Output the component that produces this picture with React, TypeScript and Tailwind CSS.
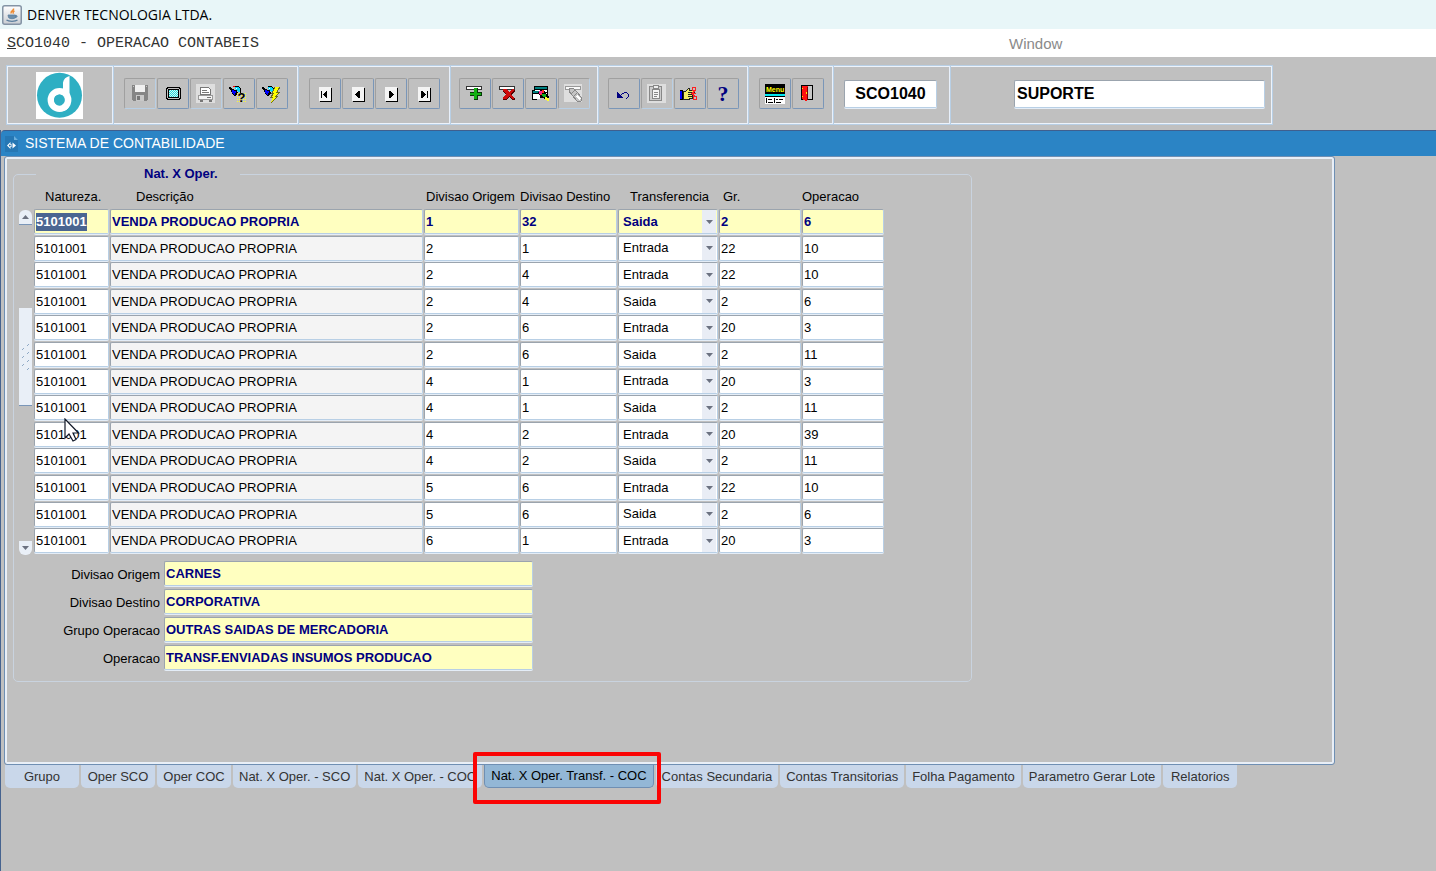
import type { ReactNode } from "react";

const field =
  "block w-full rounded-[2px] border border-t-[#9ba4ae] border-l-[#9ba4ae] border-r-[#b8cfe5] border-b-[#b8cfe5] shadow-[0_1px_0_#e4edf7] outline-none";
const activeField = "bg-[#ffffc0] font-bold text-[#000080]";

type Row = [origem: string, destino: string, transf: string, gr: string, oper: string];

const rows: Row[] = [
  ["1", "32", "Saida", "2", "6"],
  ["2", "1", "Entrada", "22", "10"],
  ["2", "4", "Entrada", "22", "10"],
  ["2", "4", "Saida", "2", "6"],
  ["2", "6", "Entrada", "20", "3"],
  ["2", "6", "Saida", "2", "11"],
  ["4", "1", "Entrada", "20", "3"],
  ["4", "1", "Saida", "2", "11"],
  ["4", "2", "Entrada", "20", "39"],
  ["4", "2", "Saida", "2", "11"],
  ["5", "6", "Entrada", "22", "10"],
  ["5", "6", "Saida", "2", "6"],
  ["6", "1", "Entrada", "20", "3"],
];

const details = [
  ["Divisao Origem", "CARNES"],
  ["Divisao Destino", "CORPORATIVA"],
  ["Grupo Operacao", "OUTRAS SAIDAS DE MERCADORIA"],
  ["Operacao", "TRANSF.ENVIADAS INSUMOS PRODUCAO"],
];

const tabs = [
  "Grupo",
  "Oper SCO",
  "Oper COC",
  "Nat. X Oper. - SCO",
  "Nat. X Oper. - COC",
  "Nat. X Oper. Transf. - COC",
  "Contas Secundaria",
  "Contas Transitorias",
  "Folha Pagamento",
  "Parametro Gerar Lote",
  "Relatorios",
];
const activeTab = "Nat. X Oper. Transf. - COC";

function Icon({ children }: { children: ReactNode }) {
  return (
    <svg width="20" height="20" viewBox="0 0 20 20" shapeRendering="crispEdges" className="overflow-visible" aria-hidden="true">
      {children}
    </svg>
  );
}

function ToolButton({ label, disabled = false, children }: { label: string; disabled?: boolean; children: ReactNode }) {
  return (
    <button
      type="button"
      aria-label={label}
      disabled={disabled}
      className={`flex h-[31px] w-8 items-center justify-center rounded-[2px] border border-t-[#a0a0a0] border-l-[#a0a0a0] ${
        disabled ? "border-r-[#b8cfe5] border-b-[#b8cfe5]" : "border-r-[#7a96b8] border-b-[#7a96b8]"
      }`}
    >
      {children}
    </button>
  );
}

function Group({ className, children }: { className: string; children: ReactNode }) {
  return (
    <div className={`flex gap-px border-r border-[#e8f0fb] pt-3 shadow-[1px_0_0_#b8cfe5] ${className}`}>{children}</div>
  );
}

function PageIcon({ d }: { d: string }) {
  return (
    <Icon>
      <path d="M5 4h12v14H5z" fill="#000" />
      <path d="M4 3h12v14H4z" fill="#f4f4f4" />
      <path d={d} fill="#000" />
    </Icon>
  );
}

const torch = (
  <>
    <path d="M0 3h2v1h1v1h2v1h3v2h1v2H8v1H7v1H5v-1H4v-1H3V8H2V6H1V5H0z" fill="#000" />
    <path d="M3 6h2v1h2v2H6v2H5v-1H4V9H3z" fill="#0000ff" />
    <path d="M6 3h4v1h1v4H9V7H8V6H7V5H6z" fill="#00d8ff" />
    <path d="M10 3h1v1h-1zM11 4h1v5h-1zM6 2h4v1H6z" fill="#000" />
    <path d="M7 4h1v1H7z" fill="#fff" />
  </>
);

function JavaIcon() {
  return (
    <svg width="20" height="20" viewBox="0 0 20 20" aria-hidden="true">
      <defs>
        <linearGradient id="java-bg" x1="0" y1="0" x2="0" y2="1">
          <stop offset="0" stopColor="#fff" />
          <stop offset="1" stopColor="#c9cdd2" />
        </linearGradient>
      </defs>
      <rect x=".75" y=".75" width="18.5" height="18.5" rx="2" fill="url(#java-bg)" stroke="#8494a5" strokeWidth="1.5" />
      <path d="M11.5 3.500c1 2-3.500 2.500-2.300 5M12.500 5.800c-1.500.8-1.800 1.500-1 2.900" fill="none" stroke="#ee8a32" strokeWidth="1.500" />
      <path d="M6 10h7.500v2.500c-1 1.600-6 1.600-7 0zM13.500 10.500c2.500-.5 2 2-.5 2.300" fill="#6d8eaa" stroke="#5c7f9e" strokeWidth=".8" />
      <path d="M4.500 15c2 1.700 9 1.700 11 0" fill="none" stroke="#5c7f9e" strokeWidth="1.200" />
    </svg>
  );
}

function Logo() {
  return (
    <svg width="47" height="47" viewBox="0 0 47 47" role="img" aria-label="Denver">
      <path d="M0 0h47v47H0z" fill="#fff" />
      <circle cx="23.500" cy="23.300" r="22.500" fill="#2eafc3" />
      <circle cx="23.500" cy="28" r="8.700" fill="none" stroke="#fff" strokeWidth="6.400" />
      <path d="M27 10.500C27.500 7 30 5 33.500 4v22c0 5-2 9-6 11l-2-3c1.500-2 1.500-5 1.500-8z" fill="#fff" />
      <path d="M22 39c5 1.200 9.500-.5 11.500-5-1 1.700-3 2-5 1.300" fill="#fff" />
      <circle cx="23.500" cy="28" r="5.400" fill="#2eafc3" />
    </svg>
  );
}

function Toolbar() {
  return (
    <div
      role="toolbar"
      aria-label="Ferramentas"
      className="mt-2 ml-[6px] flex h-[60px] w-fit border border-[#b8cfe5] shadow-[inset_0_0_0_1px_#edf3fb]"
    >
      <div className="flex w-[106px] border-r border-[#e8f0fb] pt-[6px] pl-[29px] shadow-[1px_0_0_#b8cfe5]">
        <Logo />
      </div>
      <Group className="w-[185px] pl-[11px]">
        <ToolButton label="Salvar" disabled>
          <Icon>
            <path d="M2 1h16v15h-1v1H3v-1H2z" fill="#858585" />
            <path d="M5 1h10v7H5z" fill="#f0f0f0" />
            <path d="M3 2h1v1H3zM16 2h1v1h-1zM6 11h8v6H6z" fill="#c8c8c8" />
            <path d="M7 12h3v4H7z" fill="#777" />
          </Icon>
        </ToolButton>
        <ToolButton label="Tela">
          <Icon>
            <path d="M4 3h13v1h1v11h-1v1H4v-1H3V4h1z" fill="#000" />
            <path d="M5 4h11v1h1v9h-1v1H5v-1H4V5h1z" fill="#c0c0c0" />
            <path d="M5 5h11v9H5z" fill="#000" />
            <path d="M6 6h9v7H6z" fill="#d8f4f4" />
            <path d="M6 6.500h9M6 8.500h9M6 10.500h9M6 12.500h9" stroke="#20dada" strokeDasharray="1 1" />
            <path d="M7 7.500h8M7 9.500h8M7 11.500h8" stroke="#20dada" strokeDasharray="1 1" />
          </Icon>
        </ToolButton>
        <ToolButton label="Imprimir" disabled>
          <Icon>
            <path d="M0 0h19v19H0z" fill="#dedede" />
            <path d="M4.500 3.500h8l2 2v5h-10z" fill="#fff" stroke="#777" />
            <path d="M6 6.500h5M6 8.500h7" stroke="#777" />
            <path d="M2.500 11.500h14v4h-14z" fill="#f5f5f5" stroke="#999" />
            <path d="M11 13h4v1h-4zM4 16h3v2H4zM13 16h3v2h-3z" fill="#777" />
          </Icon>
        </ToolButton>
        <ToolButton label="Entrar consulta">
          <Icon>
            {torch}
            <path d="M4 2h2v1H4z" fill="#f00" />
            <path d="M8 9.500h10M8 11.500h10M8 13.500h10M8 15.500h10M8 17.500h10" stroke="#ffff30" strokeDasharray="1 1" />
            <text x="8.500" y="18" fontFamily="Liberation Sans" fontSize="13" fontWeight="bold" fill="#000">?</text>
          </Icon>
        </ToolButton>
        <ToolButton label="Executar consulta">
          <Icon>
            {torch}
            <path d="M13 3h5l-3 5h3l-4 4h2l-7 7 2-6H9l3-4h-1z" fill="#ffff00" />
            <path d="M18 3l-3 5h3l-4 4h2l-7 7M13 3l-3 6h2l-3 4h2" fill="none" stroke="#6b6b20" />
          </Icon>
        </ToolButton>
      </Group>
      <Group className="w-[152px] pl-[11px]">
        <ToolButton label="Primeiro"><PageIcon d="M6 7h1v7H6zM12 7v7h-1v-1h-1v-1H9v-1H8v-1h1V9h1V8h1V7z" /></ToolButton>
        <ToolButton label="Anterior"><PageIcon d="M12 7v7h-2v-1H9v-1H8v-1H7v-1h1V9h1V8h1V7z" /></ToolButton>
        <ToolButton label="Proximo"><PageIcon d="M8 7h2v1h1v1h1v1h1v1h-1v1h-1v1h-1v1H8z" /></ToolButton>
        <ToolButton label="Ultimo"><PageIcon d="M13 7h1v7h-1zM7 7h2v1h1v1h1v1h1v1h-1v1h-1v1H9v1H7z" /></ToolButton>
      </Group>
      <Group className="w-[148px] pl-[9px]">
        <ToolButton label="Inserir registro">
          <Icon>
            <path d="M1.500 2.500h15v3h-15z" fill="#fff" stroke="#333" />
            <path d="M9 4h4v4h4v4h-4v4H9v-4H5V8h4z" fill="#063806" />
            <path d="M9 4h3v5h4v2h-4v4H9v-4H5V9h4z" fill="#12b012" />
          </Icon>
        </ToolButton>
        <ToolButton label="Excluir registro">
          <Icon>
            <path d="M1.500 2.500h15v3h-15z" fill="#fff" stroke="#333" />
            <path d="M5 6h3l3 3 3-3h3v2l-4 3 4 4v1h-3l-3-3-3 3H5v-2l4-3-4-3z" fill="#520000" />
            <path d="M5 5h3l3 3 3-3h2v2l-4 3 4 4v1h-2l-3-3-3 3H5v-2l4-3-4-3z" fill="#cd0a0a" />
          </Icon>
        </ToolButton>
        <ToolButton label="Limpar bloco">
          <Icon>
            <path d="M3 2h14v12H6v2H1V6h2z" fill="#000" />
            <path d="M4 3h12v2H4z" fill="#008080" />
            <path d="M4 6h12v2H4z" fill="#fff" />
            <path d="M2 7h9v2H2z" fill="#008080" />
            <path d="M2 10h7v5H2zM11 9h5v4h-5z" fill="#fff" />
            <path d="M7 8l2-2h4l2 4 3 2v3l-3 1-4-3-3-2z" fill="#000" />
            <path d="M8 7h3v3H8z" fill="#f4209a" />
            <path d="M11 6h2v3h-2zM9 10h2v1H9z" fill="#ff3020" />
            <path d="M11 10h4v3h-3v-1h-1z" fill="#10b020" />
            <path d="M14 13h2v1h2v3h-2v-1h-2z" fill="#ffff30" />
          </Icon>
        </ToolButton>
        <ToolButton label="Limpar registro" disabled>
          <Icon>
            <path d="M0 0h18v18H0z" fill="#dedede" />
            <path d="M1.500 2.500h15v3h-15z" fill="#fafafa" stroke="#999" />
            <path d="M5 4h4l4 4 4 5 1 3-2 2-3-1-5-6-3-4z" fill="#c4c4c4" stroke="#888" />
            <path d="M12 12l2-1 3 4-2 1z" fill="#fff" />
            <path d="M8 9l3-3M10 12l3-3" stroke="#888" />
          </Icon>
        </ToolButton>
      </Group>
      <Group className="w-[150px] pl-[10px]">
        <ToolButton label="Desfazer">
          <Icon>
            <path d="M3 8h1v1h1v1h1v1h1v1h1v1h1v1H3z" fill="#000080" />
            <path d="M6 11h1v-1h1V9h2V8h3v1h1v1h1v3h-1v1h-1v1h-1v-1h1v-1h1v-3h-1V9h-3v1H8v1H7v1H6z" fill="#000080" />
          </Icon>
        </ToolButton>
        <ToolButton label="Colar" disabled>
          <Icon>
            <path d="M0 0h19v19H0z" fill="#dedede" />
            <path d="M2.500 2.500h12v14h-12z" fill="#ccc" stroke="#888" />
            <path d="M5.500 5.500h7v9h-7z" fill="#f5f5f5" stroke="#888" />
            <path d="M6.500 1.500h5v3h-5z" fill="#eee" stroke="#888" />
            <path d="M7 8.500h4M7 10.500h4M7 12.500h3" stroke="#888" />
          </Icon>
        </ToolButton>
        <ToolButton label="Lista">
          <Icon>
            <path d="M0 6h3v10H0z" fill="#000" />
            <path d="M0 7h2v8H0z" fill="#0000ff" />
            <path d="M3.500 7.500h2l3-3h1v2h5v3h-2v5h-3v1h-6z" fill="#f3ed65" stroke="#222" />
            <path d="M8 8.500h5M8 10.500h4M8 12.500h4" stroke="#222" />
            <path d="M12.500 3.500h3v3h-3zM13.500 12.500h3v3h-3zM15 6.500l-3 3 3 3M12 9.500h4" fill="none" stroke="#ff2020" />
          </Icon>
        </ToolButton>
        <ToolButton label="Ajuda">
          <span className="font-['Liberation_Serif',serif] text-[22px] leading-6 font-bold text-[#000080]">?</span>
        </ToolButton>
      </Group>
      <Group className="w-[85px] pl-[11px]">
        <ToolButton label="Menu">
          <Icon>
            <path d="M0 0h20v10H0z" fill="#000" />
            <text x="1" y="8" fontFamily="Liberation Sans Narrow, Liberation Sans" fontSize="7" fontWeight="bold" fill="#ffff00">Menu</text>
            <path d="M0 10h20v2H0z" fill="#00e8f0" />
            <path d="M0 12h20v8H0z" fill="#fff" />
            <path d="M0 12.500h20M3 15.500h4M11 15.500h2M14 15.500h4M3 18.500h5M11 18.500h5" stroke="#000" />
            <path d="M1.500 14v5M9.500 14v5" stroke="#000" />
          </Icon>
        </ToolButton>
        <ToolButton label="Sair">
          <Icon>
            <path d="M3 1h12v15H3z" fill="#000" />
            <path d="M10 2h4v13h-4z" fill="#c8c8c8" />
            <path d="M4 2h5l1 1v13l-2 1-4-2z" fill="#ff1010" />
            <path d="M9 3h1v13H9z" fill="#7a0000" />
            <path d="M4 4h1v1H4zM4 12h1v1H4zM8 8h1v2H8z" fill="#fff200" />
          </Icon>
        </ToolButton>
      </Group>
      <div className="w-[117px] border-r border-[#e8f0fb] pt-[14px] pr-3 pl-[11px] shadow-[1px_0_0_#b8cfe5]">
        <input
          aria-label="Programa"
          readOnly
          value="SCO1040"
          className={`${field} h-7 bg-white text-center text-base font-bold text-black`}
        />
      </div>
      <div className="w-[322px] pt-[14px] pr-[7px] pl-16">
        <input
          aria-label="Usuario"
          readOnly
          value="SUPORTE"
          className={`${field} h-7 bg-white pl-[2px] text-base font-bold text-black`}
        />
      </div>
    </div>
  );
}

function ScrollColumn() {
  return (
    <div className="mt-[26px] flex w-[13px] flex-col">
      <button
        type="button"
        aria-label="Rolar para cima"
        className="flex h-[15px] items-center justify-center rounded-t-[6px] border-b border-[#7a96b8] bg-[#e9eff7]"
      >
        <svg width="7" height="4" viewBox="0 0 7 4" aria-hidden="true"><path d="M0 4l3.500-4L7 4z" fill="#6b7180" /></svg>
      </button>
      <div className="mt-[83px] flex h-[98px] items-center justify-center border-b border-[#7a96b8] bg-[#e9eff7]">
        <svg width="9" height="28" viewBox="0 0 9 28" aria-hidden="true">
          <path d="M1 7l2-2M6 3l2-2M1 15l2-2M6 11l2-2M1 23l2-2M6 19l2-2M6 27l2-2" stroke="#8fa9c6" />
        </svg>
      </div>
      <button
        type="button"
        aria-label="Rolar para baixo"
        className="mt-auto flex h-[14px] items-center justify-center rounded-b-[6px] bg-[#e9eff7]"
      >
        <svg width="7" height="4" viewBox="0 0 7 4" aria-hidden="true"><path d="M0 0l3.500 4L7 0z" fill="#6b7180" /></svg>
      </button>
    </div>
  );
}

function GridTable() {
  const cell = "p-0 pr-px align-top";
  return (
    <table className="h-[371px] w-[851px] table-fixed border-collapse text-[13px]">
      <colgroup>
        <col className="w-[76px]" />
        <col className="w-[314px]" />
        <col className="w-[96px]" />
        <col className="w-[98px]" />
        <col className="w-[101px]" />
        <col className="w-[83px]" />
        <col className="w-[83px]" />
      </colgroup>
      <thead>
        <tr className="h-[25px] text-left whitespace-nowrap [&>th]:p-0 [&>th]:font-normal">
          <th scope="col"><span className="pl-[11px]">Natureza.</span></th>
          <th scope="col"><span className="pl-[26px]">Descrição</span></th>
          <th scope="col"><span className="pl-[2px]">Divisao Origem</span></th>
          <th scope="col">Divisao Destino</th>
          <th scope="col"><span className="pl-3">Transferencia</span></th>
          <th scope="col"><span className="pl-1">Gr.</span></th>
          <th scope="col">Operacao</th>
        </tr>
      </thead>
      <tbody>
        {rows.map(([origem, destino, transf, gr, oper], i) => {
          const tone = i === 0 ? activeField : "bg-white text-black";
          const readTone = i === 0 ? activeField : "bg-[#f4f4f4] text-black";
          const input = (label: string, value: string, color: string) => (
            <td className={cell}>
              <input aria-label={`${label} ${i + 1}`} defaultValue={value} className={`${field} ${color} h-[25px] pl-px`} />
            </td>
          );
          return (
            <tr key={i}>
              {i === 0 ? (
                <td className={cell}>
                  <div className={`${field} ${activeField} flex h-[25px] items-center pl-px`}>
                    <input
                      aria-label="Natureza 1"
                      defaultValue="5101001"
                      className="h-[18px] w-[51px] bg-[#4a6591] font-bold text-white outline-none"
                    />
                  </div>
                </td>
              ) : (
                input("Natureza", "5101001", tone)
              )}
              {input("Descrição", "VENDA PRODUCAO PROPRIA", readTone)}
              {input("Divisao Origem", origem, tone)}
              {input("Divisao Destino", destino, tone)}
              <td className={cell}>
                <div className="relative">
                  <select
                    aria-label={`Transferencia ${i + 1}`}
                    defaultValue={transf}
                    className={`${field} ${tone} h-[25px] appearance-none pl-1`}
                  >
                    <option>Entrada</option>
                    <option>Saida</option>
                  </select>
                  <span className="pointer-events-none absolute inset-y-px right-[2px] flex w-[14px] items-center justify-center bg-[#e9edf5]">
                    <svg width="7" height="4" viewBox="0 0 7 4" aria-hidden="true"><path d="M0 0l3.500 4L7 0z" fill="#6b7180" /></svg>
                  </span>
                </div>
              </td>
              {input("Gr.", gr, tone)}
              {input("Operacao", oper, tone)}
            </tr>
          );
        })}
      </tbody>
    </table>
  );
}

export default function App() {
  return (
    <div className="relative flex min-h-screen flex-col bg-[#c0c0c0] font-['Liberation_Sans',Arial,sans-serif] text-[13px] text-black">
      <header className="flex h-[29px] items-center gap-[5px] bg-[#e8f6f8] pl-[2px]">
        <JavaIcon />
        <h1 className="font-['Open_Sans','Noto_Sans',sans-serif] text-[14px]">DENVER TECNOLOGIA LTDA.</h1>
      </header>
      <nav className="flex h-7 items-center bg-white pt-[2px]">
        <div className="w-[1009px] pl-[7px] font-['Liberation_Mono',monospace] text-[15px] text-[#333]">
          <button type="button"><u>S</u>CO1040 - OPERACAO CONTABEIS</button>
        </div>
        <button type="button" className="text-[15px] text-[#8a8a8a]">Window</button>
      </nav>
      <Toolbar />

      <main className="mt-[5px] flex-1 border-l border-[#46638f]">
        <h2 className="flex h-[26px] items-center gap-[7px] rounded-tl-[4px] border-t border-[#3f5f8f] bg-[#2b84c5] pl-1 text-[14px] text-white">
          <svg width="13" height="16" viewBox="0 0 13 16" aria-hidden="true">
            <path d="M0 0h9l4 4v12H0z" fill="#2677b4" />
            <path d="M9 0v4h4z" fill="#69aedd" />
            <path d="M5.500 6L2 9.500 5.500 13v-2h1V8h-1zM7.500 6.500L11 9.500l-3.500 3z" fill="#fff" />
            <circle cx="4.800" cy="9.500" r="1" fill="#2677b4" />
          </svg>
          SISTEMA DE CONTABILIDADE
        </h2>
        <section className="mr-[101px] ml-[3px] rounded-[3px] border border-[#6f8fb3] shadow-[inset_0_0_0_2px_#e9eff7]">
          <div className="px-2 pt-[7px] pb-[82px]">
            <fieldset className="w-fit rounded-[5px] border border-[#c9d3df] pr-[86px] pb-[11px] pl-[5px]">
              <legend className="ml-[17px] w-[204px] pl-[108px] leading-5 font-bold text-[#000080]">Nat. X Oper.</legend>
              <div className="flex gap-[2px]">
                <ScrollColumn />
                <GridTable />
              </div>
              <div className="mt-[6px] flex flex-col gap-[3px]">
                {details.map(([label, value], i) => (
                  <div key={label} className="flex items-center">
                    <label htmlFor={`detail-${i}`} className="w-[141px] pt-[2px] text-right">{label}</label>
                    <div className="ml-1 w-[369px]">
                      <input
                        id={`detail-${i}`}
                        readOnly
                        value={value}
                        className={`${field} ${activeField} h-[25px] pl-px`}
                      />
                    </div>
                  </div>
                ))}
              </div>
            </fieldset>
          </div>
        </section>
        <div role="tablist" className="ml-1 flex gap-[2px] whitespace-nowrap">
          {tabs.map((tab) =>
            tab === activeTab ? (
              <div key={tab} className="relative">
                <button
                  type="button"
                  role="tab"
                  aria-selected="true"
                  className="h-[23px] rounded-b-[5px] border border-t-0 border-[#6f8fb3] bg-[#93b7d6] px-[6px] text-black"
                >
                  {tab}
                </button>
                <span className="pointer-events-none absolute -top-[13px] -right-[7px] -bottom-4 -left-[11px] z-10 rounded-[2px] border-4 border-[#fb0404]" />
              </div>
            ) : (
              <button
                key={tab}
                type="button"
                role="tab"
                aria-selected="false"
                className="h-[23px] min-w-[74px] rounded-b-[5px] bg-[#c9d7ea] px-[6px] text-[#333]"
              >
                {tab}
              </button>
            ),
          )}
        </div>
      </main>

      <svg className="pointer-events-none absolute top-[418px] left-16" width="17" height="24" viewBox="0 0 17 24" aria-hidden="true">
        <path d="M1 1v19l4-4 4 7 3-1.500L9 15h5.500z" fill="#fff" stroke="#111827" strokeWidth="1.200" />
      </svg>
    </div>
  );
}
